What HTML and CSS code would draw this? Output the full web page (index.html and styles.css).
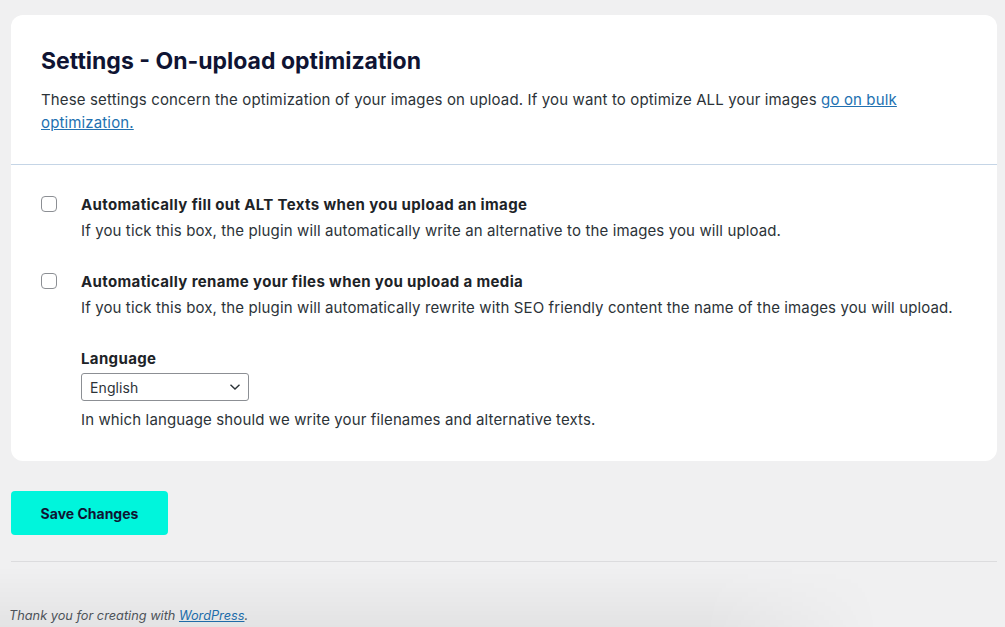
FILE: index.html
```html
<!DOCTYPE html>
<html lang="en">
<head>
<meta charset="utf-8">
<link rel="stylesheet" href="styles.css">
</head>
<body>
<div class="wrap">
  <div class="card">
    <div class="card-head">
      <h2 class="title">Settings - On-upload optimization</h2>
      <p class="intro">These settings concern the optimization of your images on upload. If you want to optimize ALL your images <a href="#" class="link">go on bulk optimization.</a></p>
    </div>
    <div class="card-body">
      <div class="opt">
        <span class="cb"></span>
        <div class="opt-text">
          <div class="opt-label">Automatically fill out ALT Texts when you upload an image</div>
          <div class="opt-desc">If you tick this box, the plugin will automatically write an alternative to the images you will upload.</div>
        </div>
      </div>
      <div class="opt">
        <span class="cb"></span>
        <div class="opt-text">
          <div class="opt-label">Automatically rename your files when you upload a media</div>
          <div class="opt-desc">If you tick this box, the plugin will automatically rewrite with SEO friendly content the name of the images you will upload.</div>
          <div class="lang">
            <div class="opt-label">Language</div>
            <div class="select"><span>English</span>
              <svg width="12" height="8" viewBox="0 0 12 8"><path d="M1.5 1.8 L6 6 L10.5 1.8" fill="none" stroke="#2c3338" stroke-width="1.4"/></svg>
            </div>
            <div class="opt-desc help">In which language should we write your filenames and alternative texts.</div>
          </div>
        </div>
      </div>
    </div>
  </div>
  <div class="actions"><button class="save">Save Changes</button></div>
  <hr class="sep">
  <p class="footer">Thank you for creating with <a href="#" class="flink">WordPress</a>.</p>
</div>
</body>
</html>
```
FILE: styles.css
```css
html, body { margin: 0; padding: 0; }
body {
  background: #f0f0f1;
  font-family: Inter, "Noto Sans", sans-serif;
  color: #2c3338;
  height: 627px;
  overflow: hidden;
  position: relative;
}
body::after {
  content: "";
  position: absolute;
  left: 0;
  bottom: 0;
  width: 880px;
  height: 60px;
  background: linear-gradient(to bottom, rgba(0,0,0,0), rgba(0,0,0,0.05));
  -webkit-mask-image: linear-gradient(to right, #000 80%, transparent);
  mask-image: linear-gradient(to right, #000 80%, transparent);
  pointer-events: none;
}
.wrap { padding: 15px 8px 0 11px; }
.card {
  background: #fff;
  border-radius: 12px;
  overflow: hidden;
}
.card-head {
  padding: 33px 30px 30px;
  border-bottom: 1px solid #c5d5e6;
}
.title {
  margin: 0 0 14px;
  font-size: 23px;
  line-height: 26px;
  font-weight: 700;
  color: #0f1433;
}
.intro {
  margin: 0;
  font-size: 15px;
  line-height: 23px;
  letter-spacing: 0.14px;
  color: #2c3338;
}
.link { color: #2271b1; text-decoration: underline; }
.card-body { padding: 30px 30px 32px; }
.opt { display: flex; gap: 24px; margin-bottom: 32px; }
.opt:last-child { margin-bottom: 0; }
.cb {
  flex: none;
  width: 14px; height: 14px;
  border: 1px solid #8c8f94;
  border-radius: 4px;
  margin-top: 1px;
  background: #fff;
}
.opt-label {
  font-size: 15px;
  font-weight: 700;
  line-height: 19px;
  letter-spacing: 0.36px;
  color: #1d2327;
}
.opt-desc {
  font-size: 15px;
  line-height: 19px;
  letter-spacing: 0.12px;
  margin-top: 7px;
  color: #2c3338;
}
.lang { margin-top: 32px; }
.select {
  margin-top: 5px;
  width: 168px;
  height: 28px;
  box-sizing: border-box;
  border: 1px solid #8c8f94;
  border-radius: 3px;
  display: flex;
  align-items: center;
  justify-content: space-between;
  padding: 0 7px 0 8px;
  font-size: 14px;
  letter-spacing: 0.1px;
  color: #2c3338;
}
.help { margin-top: 9px; }
.actions { padding-top: 30px; }
.save {
  width: 157px;
  height: 44px;
  background: #00f5dc;
  border: none;
  border-radius: 4px;
  font-family: Inter, "Noto Sans", sans-serif;
  font-weight: 700;
  font-size: 14px;
  color: #0f1433;
  padding: 0;
}
.sep {
  margin: 26px 0 0;
  border: none;
  border-top: 1px solid #dcdcde;
  height: 0;
}
.footer {
  margin: 46px 0 0 -2px;
  font-size: 12.75px;
  font-style: italic;
  color: #50575e;
}
.flink { color: #2271b1; }
```
